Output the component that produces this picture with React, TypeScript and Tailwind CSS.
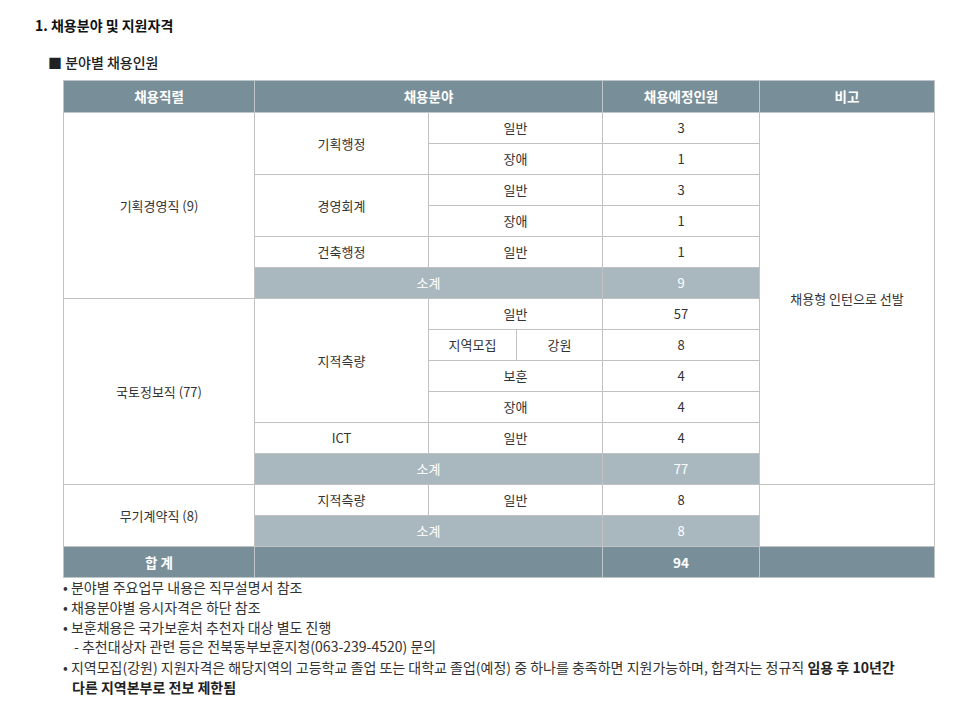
const font = { fontFamily: '"Noto Sans CJK KR", "Noto Sans", sans-serif' };

const td = "border border-[#c2c2c2] text-center align-middle p-0";
const sub = "border border-[#c2c2c2] text-center align-middle p-0 bg-[#a9b8bf] text-white";
const th = "border border-[#bfc6ca] text-center align-middle p-0 bg-[#788e99] text-white font-bold text-[13.5px]";

function Cell({ children, className = td, rowSpan, colSpan }: { children?: React.ReactNode; className?: string; rowSpan?: number; colSpan?: number }) {
  return (
    <td rowSpan={rowSpan} colSpan={colSpan} className={className}>
      {children}
    </td>
  );
}

export default function App() {
  return (
    <div className="min-h-[704px] w-[970px] bg-white text-[#333]" style={font}>
      <div className="pl-[35px] pt-[15px]">
        <h2 className="text-[14px] font-bold leading-5 text-[#111]">1. 채용분야 및 지원자격</h2>
        <h3 className="mt-[17px] pl-[13px] text-[14px] font-medium leading-5 text-[#222]">■ 분야별 채용인원</h3>
      </div>

      <div className="ml-[63px] mt-[8px] w-[871px]">
        <table className="w-[871px] table-fixed border-collapse text-[13px] text-[#333]">
          <colgroup>
            <col className="w-[191px]" />
            <col className="w-[174px]" />
            <col className="w-[88px]" />
            <col className="w-[86px]" />
            <col className="w-[157px]" />
            <col className="w-[175px]" />
          </colgroup>
          <tbody>
            <tr className="h-[32px]">
              <th className={th}>채용직렬</th>
              <th className={th} colSpan={3}>채용분야</th>
              <th className={th}>채용예정인원</th>
              <th className={th}>비고</th>
            </tr>

            <tr className="h-[31px]">
              <Cell rowSpan={6}>기획경영직 (9)</Cell>
              <Cell rowSpan={2}>기획행정</Cell>
              <Cell colSpan={2}>일반</Cell>
              <Cell>3</Cell>
              <Cell rowSpan={12}>채용형 인턴으로 선발</Cell>
            </tr>
            <tr className="h-[31px]">
              <Cell colSpan={2}>장애</Cell>
              <Cell>1</Cell>
            </tr>
            <tr className="h-[31px]">
              <Cell rowSpan={2}>경영회계</Cell>
              <Cell colSpan={2}>일반</Cell>
              <Cell>3</Cell>
            </tr>
            <tr className="h-[31px]">
              <Cell colSpan={2}>장애</Cell>
              <Cell>1</Cell>
            </tr>
            <tr className="h-[31px]">
              <Cell>건축행정</Cell>
              <Cell colSpan={2}>일반</Cell>
              <Cell>1</Cell>
            </tr>
            <tr className="h-[31px]">
              <Cell className={sub} colSpan={3}>소계</Cell>
              <Cell className={sub}>9</Cell>
            </tr>

            <tr className="h-[31px]">
              <Cell rowSpan={6}>국토정보직 (77)</Cell>
              <Cell rowSpan={4}>지적측량</Cell>
              <Cell colSpan={2}>일반</Cell>
              <Cell>57</Cell>
            </tr>
            <tr className="h-[31px]">
              <Cell>지역모집</Cell>
              <Cell>강원</Cell>
              <Cell>8</Cell>
            </tr>
            <tr className="h-[31px]">
              <Cell colSpan={2}>보훈</Cell>
              <Cell>4</Cell>
            </tr>
            <tr className="h-[31px]">
              <Cell colSpan={2}>장애</Cell>
              <Cell>4</Cell>
            </tr>
            <tr className="h-[31px]">
              <Cell>ICT</Cell>
              <Cell colSpan={2}>일반</Cell>
              <Cell>4</Cell>
            </tr>
            <tr className="h-[31px]">
              <Cell className={sub} colSpan={3}>소계</Cell>
              <Cell className={sub}>77</Cell>
            </tr>

            <tr className="h-[31px]">
              <Cell rowSpan={2}>무기계약직 (8)</Cell>
              <Cell>지적측량</Cell>
              <Cell colSpan={2}>일반</Cell>
              <Cell>8</Cell>
              <Cell rowSpan={2}></Cell>
            </tr>
            <tr className="h-[31px]">
              <Cell className={sub} colSpan={3}>소계</Cell>
              <Cell className={sub}>8</Cell>
            </tr>

            <tr className="h-[31px]">
              <Cell className={th}>합 계</Cell>
              <Cell className={th} colSpan={3}></Cell>
              <Cell className={th}>94</Cell>
              <Cell className={th}></Cell>
            </tr>
          </tbody>
        </table>

        <ul className="text-[14px] leading-[19.8px] text-[#333]">
          <li>• 분야별 주요업무 내용은 직무설명서 참조</li>
          <li>• 채용분야별 응시자격은 하단 참조</li>
          <li>• 보훈채용은 국가보훈처 추천자 대상 별도 진행</li>
          <li className="pl-[11px]">- 추천대상자 관련 등은 전북동부보훈지청(063-239-4520) 문의</li>
          <li className="pt-[1px]">
            • 지역모집(강원) 지원자격은 해당지역의 고등학교 졸업 또는 대학교 졸업(예정) 중 하나를 충족하면 지원가능하며, 합격자는 정규직{" "}
            <b className="font-bold text-[#222]">임용 후 10년간</b>
            <br />
            <b className="ml-[9px] font-bold text-[#222]">다른 지역본부로 전보 제한됨</b>
          </li>
        </ul>
      </div>
    </div>
  );
}
